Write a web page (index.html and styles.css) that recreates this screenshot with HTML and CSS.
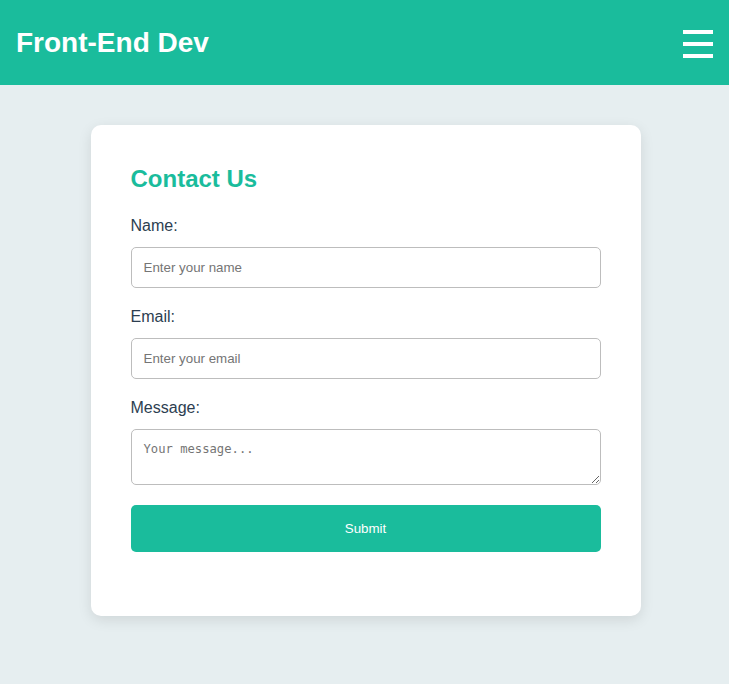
FILE: index.html
```html
<!DOCTYPE html>
<html lang="en">
<head>
<meta charset="utf-8">
<title>Front-End Dev</title>
<link rel="stylesheet" href="styles.css">
</head>
<body>
<header class="topbar">
  <h1 class="brand">Front-End Dev</h1>
  <button class="menu" aria-label="Menu"><span></span><span></span><span></span></button>
</header>
<main class="page">
  <section class="card">
    <h2 class="title">Contact Us</h2>
    <form class="form">
      <label class="label" for="name">Name:</label>
      <input class="field" id="name" type="text" placeholder="Enter your name">
      <label class="label" for="email">Email:</label>
      <input class="field" id="email" type="email" placeholder="Enter your email">
      <label class="label label-msg" for="msg">Message:</label>
      <textarea class="field area" id="msg" placeholder="Your message..."></textarea>
      <button class="submit" type="button">Submit</button>
    </form>
  </section>
</main>
</body>
</html>
```

FILE: styles.css
```css
* { box-sizing: border-box; }
html, body { margin: 0; padding: 0; }
body {
  background: #e6eef0;
  font-family: "Liberation Sans", Arial, sans-serif;
  color: #2c3e50;
  min-height: 684px;
}
.topbar {
  height: 85px;
  background: #1abc9c;
  display: flex;
  align-items: center;
  justify-content: space-between;
  padding: 0 16px;
}
.brand {
  margin: 0;
  font-size: 28px;
  font-weight: bold;
  color: #ffffff;
  line-height: 32px;
}
.menu {
  background: none;
  border: 0;
  padding: 0;
  width: 30px;
  height: 28px;
  display: flex;
  flex-direction: column;
  justify-content: space-between;
  margin-top: 2px;
  cursor: pointer;
}
.menu span {
  display: block;
  width: 30px;
  height: 4px;
  background: #ffffff;
}
.page {
  padding: 40px 0 0 2px;
  display: flex;
  justify-content: center;
}
.card {
  width: 550px;
  background: #ffffff;
  border-radius: 10px;
  box-shadow: 0 4px 14px rgba(0, 0, 0, 0.1);
  padding: 40px 40px 64px;
}
.title {
  margin: 0 0 24px;
  font-size: 24px;
  font-weight: bold;
  color: #1abc9c;
}
.form {
  display: flex;
  flex-direction: column;
}
.label {
  font-size: 16px;
  color: #2c3e50;
  margin-bottom: 12px;
}
.label-msg {
  margin-top: 0.5px;
  margin-bottom: 12.5px;
}
.field {
  display: block;
  width: 100%;
  padding: 12px;
  border: 1px solid #bdbdbd;
  border-radius: 5px;
  font-family: "Liberation Sans", Arial, sans-serif;
  font-size: 13.33px;
  color: #333;
  margin-bottom: 19.5px;
  background: #fff;
}
.field::placeholder { color: #757575; }
.area {
  font-family: "DejaVu Sans Mono", monospace;
  font-size: 12.2px;
  line-height: 15px;
  height: 56px;
  margin-bottom: 20px;
}
.submit {
  height: 47px;
  border: 0;
  border-radius: 5px;
  background: #1abc9c;
  color: #ffffff;
  font-family: "Liberation Sans", Arial, sans-serif;
  font-size: 13.33px;
  cursor: pointer;
}
```
